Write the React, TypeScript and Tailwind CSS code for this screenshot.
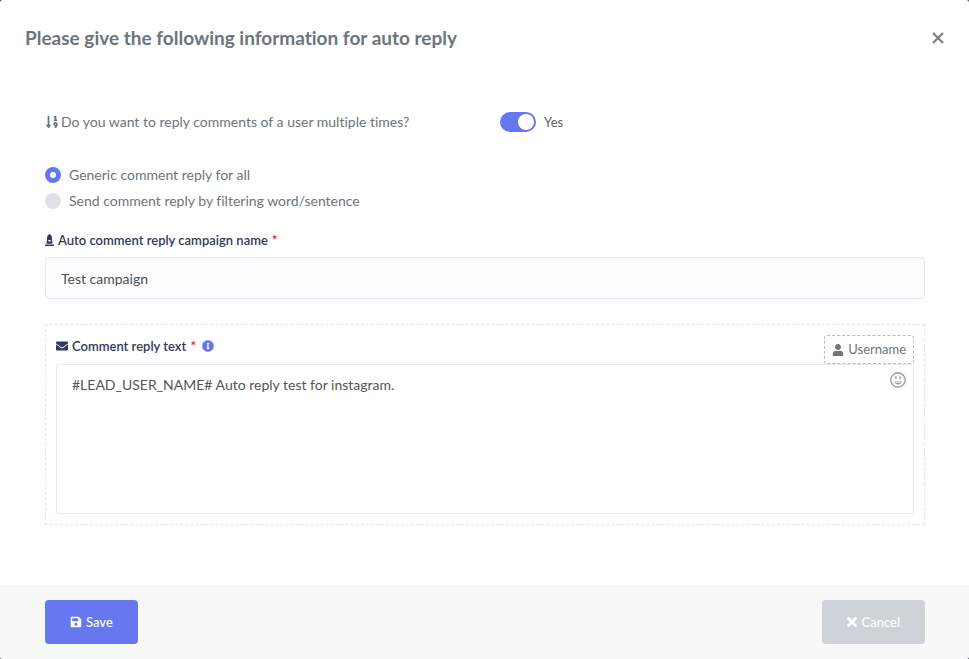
import { useState } from "react";
import {
  FaEnvelope,
  FaInfoCircle,
  FaMonument,
  FaSave,
  FaSortNumericDown,
  FaTimes,
  FaUser,
} from "react-icons/fa";

function SmileIcon() {
  return (
    <svg viewBox="0 0 16 16" className="size-4" fill="none" stroke="currentColor" aria-hidden="true">
      <circle cx="8" cy="8" r="7.2" strokeWidth="1.4" />
      <path d="M5.9 4.7v2M10.100 4.7v2" strokeWidth="1.4" strokeLinecap="round" />
      <path d="M4.200 9.200h7.600c-.2 2-1.700 3.300-3.800 3.300s-3.600-1.300-3.800-3.300z" fill="currentColor" stroke="none" />
      <path d="M5.400 10.200h5.200" stroke="#fff" strokeWidth="1" />
    </svg>
  );
}

function ReplyMode({ label, value, mode, onChange }: {
  label: string;
  value: string;
  mode: string;
  onChange: (value: string) => void;
}) {
  return (
    <label className="flex h-[26px] items-center gap-2">
      <input
        type="radio"
        name="reply-mode"
        value={value}
        checked={mode === value}
        onChange={() => onChange(value)}
        className="size-4 appearance-none rounded-full bg-[#dee2e6] checked:border-5 checked:border-[#6777ef] checked:bg-white"
      />
      {label}
    </label>
  );
}

export default function App() {
  const [multiple, setMultiple] = useState(true);
  const [mode, setMode] = useState("generic");

  return (
    <div className="min-h-screen bg-[#55585c] font-['Lato',sans-serif] text-sm text-[#6c757d] [font-variant-ligatures:none]">
      <form className="flex min-h-screen flex-col overflow-hidden rounded-[3px] bg-white" onSubmit={(e) => e.preventDefault()}>
        <header className="flex items-center justify-between px-[25px] py-6">
          <h1 className="text-[19px] leading-7 font-bold">Please give the following information for auto reply</h1>
          <button type="button" aria-label="Close" className="text-[#7f7f7f]">
            <svg viewBox="0 0 12 12" className="size-3" stroke="currentColor" strokeWidth="2.200" aria-hidden="true">
              <path d="M1 1l10 10M11 1L1 11" />
            </svg>
          </button>
        </header>

        <main className="flex-1 pt-8 pr-11 pl-[45px]">
          <div className="grid grid-cols-2 items-center gap-[30px]">
            <label htmlFor="multiple" className="flex h-7 items-center gap-0.5 whitespace-nowrap">
              <FaSortNumericDown className="size-3.5" />
              Do you want to reply comments of a user multiple times?
            </label>
            <div className="flex items-center gap-2">
              <input
                id="multiple"
                type="checkbox"
                role="switch"
                checked={multiple}
                onChange={() => setMultiple(!multiple)}
                className="flex h-5 w-9 appearance-none items-center rounded-full bg-[#dee2e6] px-0.5 before:size-4 before:rounded-full before:bg-white checked:justify-end checked:bg-[#6777ef]"
              />
              <span className="text-[13px] text-[#5b6066]">{multiple ? "Yes" : "No"}</span>
            </div>
          </div>

          <div className="mt-[26px]">
            <ReplyMode label="Generic comment reply for all" value="generic" mode={mode} onChange={setMode} />
            <ReplyMode label="Send comment reply by filtering word/sentence" value="filter" mode={mode} onChange={setMode} />
          </div>

          <label htmlFor="campaign" className="mt-4 flex h-5 items-center gap-1 text-[13px] font-semibold text-[#34395e]">
            <FaMonument className="h-3 w-[9px]" preserveAspectRatio="xMidYMid slice" />
            <span>Auto comment reply campaign name <span className="ml-px text-[#ff0000]">*</span></span>
          </label>
          <input
            id="campaign"
            defaultValue="Test campaign"
            className="mt-[7px] h-[42px] w-full rounded-[4px] border border-[#e4e6fc] bg-[#fdfdff] px-[15px] text-[#495057] outline-none"
          />

          <section className="mt-[25px] border border-dashed border-[#e2e2fc] p-[10px]">
            <div className="flex justify-between">
              <div className="flex h-[22px] items-center gap-1.5 text-[13px] font-semibold text-[#34395e]">
                <label htmlFor="reply" className="flex items-center gap-1">
                  <FaEnvelope className="size-3" />
                  <span>Comment reply text <span className="ml-px text-[#ff0000]">*</span></span>
                </label>
                <FaInfoCircle className="size-3 text-[#6777ef]" />
              </div>
              <button type="button" className="flex h-[29px] items-center gap-1 rounded-[3px] border border-dashed border-[#b8bcc0] px-[7px] text-[13px]">
                <FaUser className="size-3" />
                Username
              </button>
            </div>
            <div className="relative">
              <textarea
                id="reply"
                defaultValue="#LEAD_USER_NAME# Auto reply test for instagram."
                className="block h-[150px] w-full resize-none rounded-[3px] border border-[#e4e6fc] bg-white px-[15px] py-2 leading-6 text-[#555555] outline-none"
              />
              <button type="button" aria-label="Insert emoji" className="absolute top-2 right-2 text-[#a0a0a0]">
                <SmileIcon />
              </button>
            </div>
          </section>
        </main>

        <footer className="flex justify-between bg-[#f7f9f9] py-[15px] pr-11 pl-[45px] text-[13px] font-medium text-white">
          <button type="submit" className="flex h-11 items-center gap-1 rounded-[4px] bg-[#6777ef] px-[25px]">
            <FaSave className="size-3" />
            Save
          </button>
          <button type="button" className="flex h-11 items-center gap-1 rounded-[4px] bg-[#cdd3d8] px-[25px]">
            <FaTimes className="h-3 w-[10px]" preserveAspectRatio="xMidYMid slice" />
            Cancel
          </button>
        </footer>
      </form>
    </div>
  );
}
